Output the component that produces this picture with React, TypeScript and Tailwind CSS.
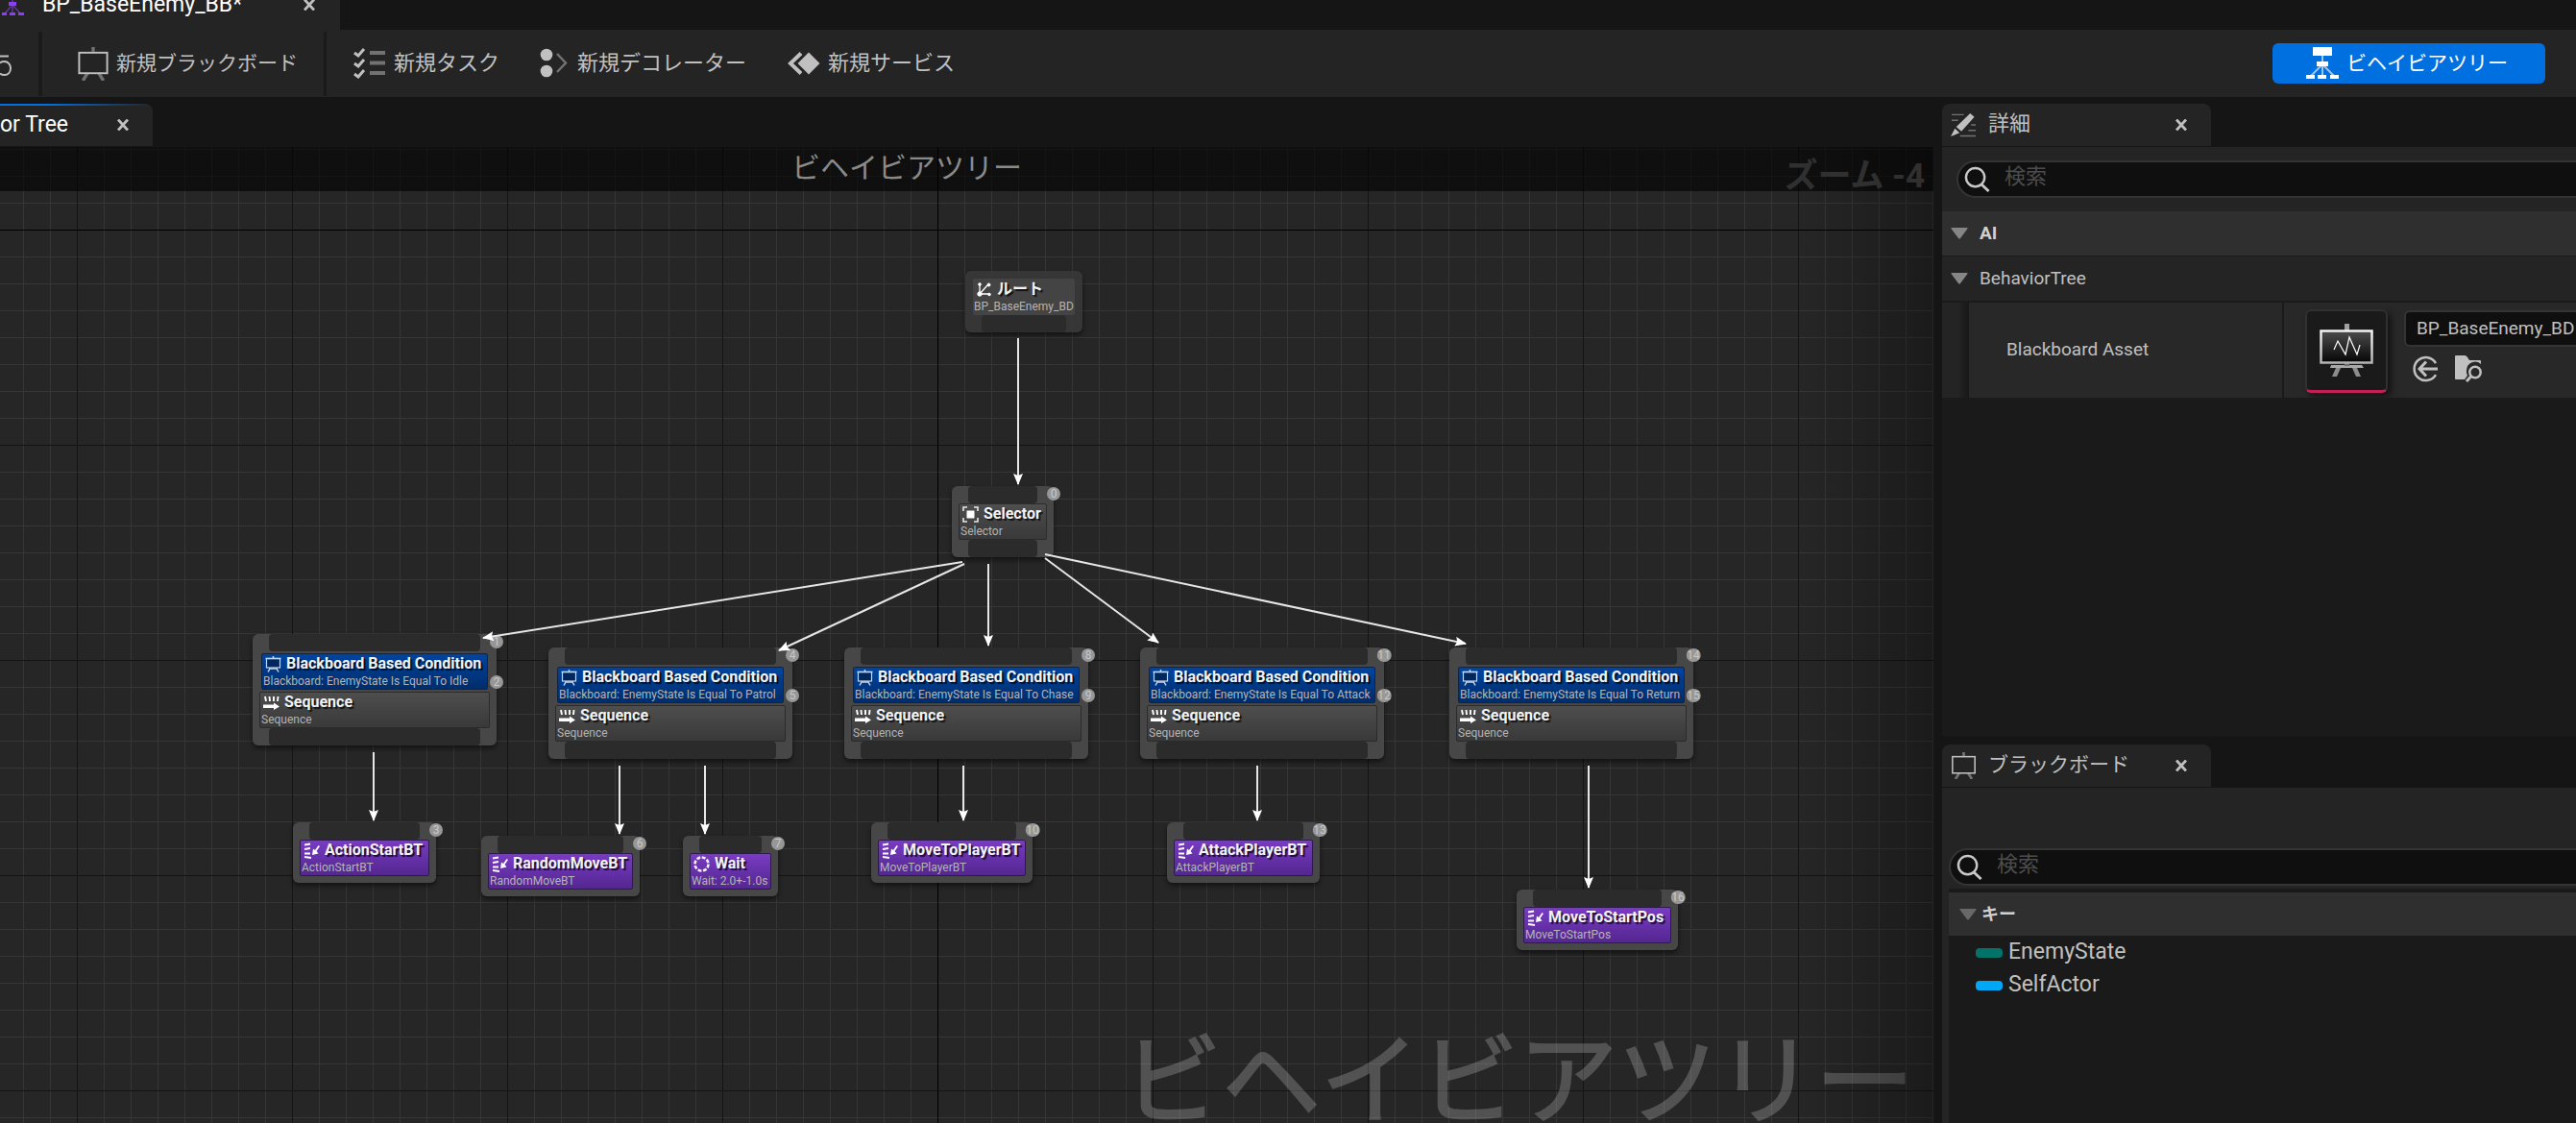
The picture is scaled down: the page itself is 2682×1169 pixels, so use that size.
import React from "react";

type IconProps = { className?: string };

/* ---------- icons ---------- */

const TreeIcon = ({ className }: IconProps) => (
  <svg viewBox="0 0 34 34" className={className} fill="currentColor" aria-hidden="true">
    <path d="M17 9v8M17 18L4 31M17 18v12M17 18l13 13" stroke="currentColor" strokeOpacity="0.6" strokeWidth="2" fill="none" />
    <rect x="7" y="0" width="20" height="9" />
    <rect x="11" y="15" width="12" height="5" />
    <rect x="0" y="29" width="9" height="4" />
    <rect x="12" y="29" width="9" height="4" />
    <rect x="25" y="29" width="9" height="4" />
  </svg>
);

const AssetTreeIcon = ({ className }: IconProps) => (
  <svg viewBox="0 0 24 24" className={className} fill="currentColor" aria-hidden="true">
    <path d="M12 2v8M12 12L3 22M12 12v9M12 12l9 10" stroke="currentColor" strokeOpacity="0.6" strokeWidth="1.5" fill="none" />
    <rect x="8" y="9" width="8" height="4" />
    <rect x="1" y="20" width="5" height="3" />
    <rect x="9" y="20" width="6" height="3" />
    <rect x="18" y="20" width="6" height="3" />
  </svg>
);

const UndoIcon = ({ className }: IconProps) => (
  <svg viewBox="0 0 14 24" className={className} fill="none" stroke="currentColor" strokeWidth="2" aria-hidden="true">
    <path d="M0 2.500H9M0 9.500c1-1 3-1.500 4.500-1.500 4 0 6.500 3.200 6.500 7 0 4-2.500 7-6.500 7-2 0-3.500-.6-4.500-1.500" />
  </svg>
);

const BoardIcon = ({ className }: IconProps) => (
  <svg viewBox="0 0 34 36" className={className} fill="none" stroke="currentColor" aria-hidden="true">
    <path d="M17 0v5M11 28l-5 8M23 28l5 8" strokeOpacity="0.5" strokeWidth="3.500" />
    <rect x="2" y="6" width="30" height="22" strokeWidth="2" />
  </svg>
);

const TaskIcon = ({ className }: IconProps) => (
  <svg viewBox="0 0 34 32" className={className} fill="none" stroke="currentColor" aria-hidden="true">
    <path d="M1 5l4 3 6-7M1 16l4 3 6-7M1 27l4 3 6-7" strokeWidth="3" />
    <path d="M17 5h16M17 15.500h16M17 26h16" strokeWidth="4" strokeOpacity="0.5" />
  </svg>
);

const DecoratorIcon = ({ className }: IconProps) => (
  <svg viewBox="0 0 30 32" className={className} aria-hidden="true">
    <circle cx="7" cy="7" r="6.300" fill="currentColor" />
    <circle cx="7" cy="24" r="6.300" fill="currentColor" />
    <path d="M18 6l9 9.500-9 9.500" fill="none" stroke="currentColor" strokeOpacity="0.5" strokeWidth="2.500" />
  </svg>
);

const ServiceIcon = ({ className }: IconProps) => (
  <svg viewBox="0 0 34 24" className={className} aria-hidden="true">
    <path d="M22 0.500L33.500 12 22 23.500 10.500 12z" fill="currentColor" />
    <path d="M14 1.500L3 12l11 10.500" fill="none" stroke="currentColor" strokeWidth="4" />
  </svg>
);

const PencilIcon = ({ className }: IconProps) => (
  <svg viewBox="0 0 28 26" className={className} aria-hidden="true">
    <path d="M1 2h13M1 8h7M22 13h5M19 19h8M10 25h17" stroke="currentColor" strokeOpacity="0.5" strokeWidth="1.500" />
    <path d="M21 0.500l4.500 4-14 15.500-5.500-5z" fill="currentColor" />
    <path d="M4.500 17l5 4.500L0 25.500z" fill="currentColor" />
  </svg>
);

const SearchIcon = ({ className }: IconProps) => (
  <svg viewBox="0 0 28 28" className={className} fill="none" stroke="currentColor" strokeWidth="2.500" aria-hidden="true">
    <circle cx="12" cy="12" r="10" />
    <path d="M18.500 19.500L26.500 27" strokeWidth="3" />
  </svg>
);

const CloseIcon = ({ className }: IconProps) => (
  <svg viewBox="0 0 12 12" className={className} fill="none" stroke="currentColor" strokeWidth="2.800" aria-hidden="true">
    <path d="M1 0.500L11 11.500M11 0.500L1 11.500" />
  </svg>
);

const Triangle = ({ className }: IconProps) => (
  <svg viewBox="0 0 18 12" className={className} fill="currentColor" aria-hidden="true">
    <path d="M1 0h16q1 0 .5 1L10 11q-1 1-2 0L.5 1Q0 0 1 0z" />
  </svg>
);

const BoardThumb = () => (
  <svg viewBox="0 0 56 56" className="h-14 w-14" aria-hidden="true">
    <defs>
      <linearGradient id="screen" x1="0" y1="0" x2="0" y2="1">
        <stop offset="0" stopColor="#4d4d4d" />
        <stop offset="1" stopColor="#050505" />
      </linearGradient>
      <linearGradient id="frame" x1="0" y1="0" x2="0" y2="1">
        <stop offset="0" stopColor="#f4f4f4" />
        <stop offset="1" stopColor="#b4b4b4" />
      </linearGradient>
    </defs>
    <rect x="26" y="0" width="5" height="8" fill="#a0a0a0" />
    <path d="M12 43h32l2 3H11z" fill="#a8a8a8" />
    <path d="M17 46h5l-4 9h-5zM34 46h5l4 9h-5z" fill="#8c8c8c" />
    <rect x="26" y="40" width="5" height="4" fill="#6e6e6e" />
    <rect x="1.500" y="7.500" width="53" height="33" fill="url(#screen)" stroke="url(#frame)" strokeWidth="2.500" />
    <path d="M15 27l4-9 8 14 4-18 8 18 3-10" fill="none" stroke="#ffffff" strokeWidth="1.200" />
  </svg>
);

const UseSelectedIcon = ({ className }: IconProps) => (
  <svg viewBox="0 0 28 28" className={className} fill="none" stroke="currentColor" strokeWidth="3" aria-hidden="true">
    <path d="M25 8A12 12 0 1 0 25 20" strokeWidth="2.500" />
    <path d="M27 14H9M15 6.500L8 14l7 7.500" />
  </svg>
);

const BrowseIcon = ({ className }: IconProps) => (
  <svg viewBox="0 0 28 28" className={className} aria-hidden="true">
    <path d="M1 0h9q2 0 3 2l2 3h11q1 0 1 1v3a9 9 0 0 0-15 6 9 9 0 0 0 1 6l-3 4H1q-1 0-1-1V1q0-1 1-1z" fill="currentColor" />
    <circle cx="21" cy="17.500" r="5.700" fill="none" stroke="currentColor" strokeWidth="2.500" />
    <path d="M16.500 22l-4.500 5" stroke="currentColor" strokeWidth="3" />
  </svg>
);

const RootGlyph = () => (
  <svg viewBox="0 0 17 17" className="size-[17px] shrink-0" stroke="#fff" fill="#fff" aria-hidden="true">
    <path d="M4 4v9h9M4 13l8-9" fill="none" strokeWidth="1.300" />
    <circle cx="4" cy="3" r="1.300" />
    <circle cx="13.500" cy="3.500" r="1.500" />
    <circle cx="4" cy="13" r="2.200" />
    <circle cx="14" cy="13.500" r="1.300" />
  </svg>
);

const SelectorGlyph = () => (
  <svg viewBox="0 0 17 17" className="size-[17px] shrink-0" aria-hidden="true">
    <rect x="4.500" y="4.500" width="8" height="8" fill="#fff" />
    <path d="M1 5V1h4M12 1h4v4M16 12v4h-4M5 16H1v-4" fill="none" stroke="#e8e8e8" strokeWidth="1.600" />
  </svg>
);

const SequenceGlyph = () => (
  <svg viewBox="0 0 17 17" className="size-[17px] shrink-0" aria-hidden="true">
    <path d="M2 2l1 5M6.500 2l.5 5M11 2v5M15.500 2l-.5 5" stroke="#fff" strokeWidth="1.900" />
    <path d="M0 10.500h11V8.500L17 12.500l-6 3.500v-2H0z" fill="#fff" />
  </svg>
);

const ConditionGlyph = () => (
  <svg viewBox="0 0 17 17" className="size-[17px] shrink-0" fill="none" stroke="#c9d6ea" aria-hidden="true">
    <rect x="1.500" y="2.500" width="14" height="9.500" fill="#00285f" strokeWidth="1.200" />
    <path d="M0.500 2.500h16M8.500 0v2M5 13l-2 3.500M12 13l2 3.500M4 13h9" strokeWidth="1.500" />
  </svg>
);

const TaskGlyph = () => (
  <svg viewBox="0 0 17 17" className="size-[17px] shrink-0" aria-hidden="true">
    <path d="M1 2.500l6-1M1 7l6-1M1 11.500h6M1 15l7 1" stroke="#fff" strokeWidth="1.900" />
    <path d="M17 4l-3.500 5 2 2.500-6.500 1.500 1-6.500 2 1.500L15.500 3z" fill="#fff" />
  </svg>
);

const WaitGlyph = () => (
  <svg viewBox="0 0 17 17" className="size-[17px] shrink-0" fill="none" stroke="#f2ecff" aria-hidden="true">
    <circle cx="8.500" cy="8.500" r="7" strokeWidth="2.600" strokeDasharray="3.900 1.600" />
  </svg>
);

/* ---------- graph ---------- */

type Kind = "root" | "composite" | "task";

type GraphNode = {
  x: number;
  y: number;
  w: number;
  kind: Kind;
  title: string;
  subtitle: string;
  glyph: React.ReactNode;
  order?: number;
  condition?: { text: string; order: number };
};

const sequence = (x: number, y: number, order: number, state: string): GraphNode => ({
  x,
  y,
  w: 254,
  kind: "composite",
  title: "Sequence",
  subtitle: "Sequence",
  glyph: <SequenceGlyph />,
  order,
  condition: { text: `Blackboard: EnemyState Is Equal To ${state}`, order: order + 1 },
});

const task = (x: number, y: number, w: number, order: number, title: string): GraphNode => ({
  x,
  y,
  w,
  kind: "task",
  title,
  subtitle: title,
  glyph: <TaskGlyph />,
  order,
});

const nodes: GraphNode[] = [
  { x: 1005, y: 129, w: 122, kind: "root", title: "ルート", subtitle: "BP_BaseEnemy_BD", glyph: <RootGlyph /> },
  { x: 991, y: 353, w: 106, kind: "composite", title: "Selector", subtitle: "Selector", glyph: <SelectorGlyph />, order: 0 },
  sequence(263, 507, 1, "Idle"),
  sequence(571, 521, 4, "Patrol"),
  sequence(879, 521, 8, "Chase"),
  sequence(1187, 521, 11, "Attack"),
  sequence(1509, 521, 14, "Return"),
  task(305, 703, 149, 3, "ActionStartBT"),
  task(501, 717, 165, 6, "RandomMoveBT"),
  {
    x: 711,
    y: 717,
    w: 99,
    kind: "task",
    title: "Wait",
    subtitle: "Wait: 2.0+-1.0s",
    glyph: <WaitGlyph />,
    order: 7,
  },
  task(907, 703, 168, 10, "MoveToPlayerBT"),
  task(1215, 703, 159, 13, "AttackPlayerBT"),
  task(1579, 773, 168, 16, "MoveToStartPos"),
];

const links: [number, number, number, number][] = [
  [1060, 199, 1060, 351],
  [1002, 432, 503, 511],
  [1004, 434, 811, 524],
  [1029, 434, 1029, 519],
  [1088, 428, 1206, 516],
  [1088, 424, 1526, 517],
  [389, 630, 389, 701],
  [645, 644, 645, 715],
  [734, 644, 734, 715],
  [1003, 644, 1003, 701],
  [1309, 644, 1309, 701],
  [1654, 644, 1654, 771],
];

function GraphBackdrop() {
  return (
    <svg className="absolute inset-0 h-full w-full" aria-hidden="true">
      <defs>
        <pattern id="minor" width="28" height="28" patternUnits="userSpaceOnUse" x="24" y="2">
          <path d="M0 0h28v1H1v27H0z" fill="#363636" />
        </pattern>
        <pattern id="major" width="224" height="224" patternUnits="userSpaceOnUse" x="80" y="86">
          <path d="M0 0h224v1H1v223H0z" fill="#141414" />
        </pattern>
      </defs>
      <rect width="100%" height="100%" fill="#262626" />
      <rect width="100%" height="100%" fill="url(#minor)" />
      <rect width="100%" height="100%" fill="url(#major)" />
      <rect x="976" y="0" width="1" height="100%" fill="#000" />
      <rect x="0" y="86" width="100%" height="1" fill="#000" />
    </svg>
  );
}

function GraphLinks() {
  return (
    <svg className="pointer-events-none absolute inset-0 h-full w-full" aria-hidden="true">
      <defs>
        <marker id="arrow" viewBox="0 0 12 10" refX="11" refY="5" markerWidth="12" markerHeight="10" markerUnits="userSpaceOnUse" orient="auto">
          <path d="M0 0L12 5 0 10 2 5z" fill="#fff" />
        </marker>
      </defs>
      {links.map(([x1, y1, x2, y2], i) => (
        <line key={i} x1={x1} y1={y1} x2={x2} y2={y2} stroke="#e6e6e6" strokeWidth="2" markerEnd="url(#arrow)" />
      ))}
    </svg>
  );
}

function Badge({ value, place }: { value: number; place: string }) {
  return (
    <span
      className={`absolute flex h-[14px] min-w-[14px] translate-x-1/2 items-center justify-center rounded-full bg-[#979797] px-px text-[12px] leading-[14px] text-[#c8c8c8] ${place}`}
    >
      {value}
    </span>
  );
}

function Block({ glyph, title, subtitle, tone }: { glyph: React.ReactNode; title: string; subtitle: string; tone: string }) {
  return (
    <div className={`h-[38px] overflow-hidden rounded-[2px] ${tone}`}>
      <div className="flex h-[20px] items-center gap-[5px] pl-[3px]">
        {glyph}
        <h3 className="whitespace-nowrap text-[16px] leading-[20px] font-bold text-[#f2f2f2] [text-shadow:2px_2px_1px_rgba(0,0,0,0.75)]">
          {title}
        </h3>
      </div>
      <p className="pl-px text-[12px] leading-[16px] whitespace-nowrap text-[#b4b4b4]">{subtitle}</p>
    </div>
  );
}

const Pin = () => <div className="mx-[17px] h-[18px] rounded-[4px] bg-[#2b2b2b]" />;

function NodeCard({ node }: { node: GraphNode }) {
  const shell = node.kind === "root" ? "bg-[#383838]/90 pt-2" : "bg-[#494949]/95";
  const tone =
    node.kind === "root"
      ? "bg-[#444444] mx-2 pt-px"
      : node.kind === "task"
        ? "mx-[7px] border border-[#2d1a4d] bg-linear-to-b from-[#793bc4] to-[#54278f]"
        : "mx-[7px] border border-[#2b2b2b] bg-linear-to-b from-[#4e4e4e] to-[#393939]";
  return (
    <article
      className={`absolute flex flex-col rounded-[6px] shadow-[0_3px_5px_rgba(0,0,0,0.5)] ${shell}`}
      style={{ left: node.x, top: node.y, width: node.w }}
    >
      {node.kind !== "root" && <Pin />}
      {node.condition && (
        <div className="mx-[9px] my-[2px]">
          <Block
            glyph={<ConditionGlyph />}
            title="Blackboard Based Condition"
            subtitle={node.condition.text}
            tone="border border-[#12233f] bg-linear-to-b from-[#01449f] to-[#002d6b]"
          />
        </div>
      )}
      <div className={node.kind === "task" ? "pb-[7px]" : ""}>
        <Block glyph={node.glyph} title={node.title} subtitle={node.subtitle} tone={tone} />
      </div>
      {node.kind !== "task" && <Pin />}
      {node.order !== undefined && <Badge value={node.order} place="right-0 top-[1px]" />}
      {node.condition && <Badge value={node.condition.order} place="right-0 top-[43px]" />}
    </article>
  );
}

function GraphPane() {
  return (
    <section className="flex min-w-0 flex-1 flex-col">
      <div className="flex h-[52px] items-end pb-px">
        <div className="relative flex h-[44px] w-[159px] items-center overflow-hidden rounded-tr-lg bg-[#242424]">
          <span className="absolute inset-x-0 top-0 h-[2px] bg-linear-to-r from-[#0070e0] from-30% to-[#0070e0]/0" />
          <h2 className="flex-1 text-[23px] leading-7 text-white">or Tree</h2>
          <button type="button" aria-label="Close tab" className="mr-[25px] text-[#c0c0c0]">
            <CloseIcon className="size-3" />
          </button>
        </div>
      </div>
      <div className="relative flex-1 overflow-hidden">
        <GraphBackdrop />
        <p className="absolute right-[20px] bottom-[-34px] text-[103px] leading-[152px] whitespace-nowrap text-white opacity-20 [-webkit-text-stroke:2px_white]">
          ビヘイビアツリー
        </p>
        {nodes.map((node) => (
          <NodeCard key={`${node.title}-${node.x}`} node={node} />
        ))}
        <GraphLinks />
        <div className="pointer-events-none absolute inset-y-0 right-0 w-[140px] bg-linear-to-r from-black/0 to-black/30" />
        <div className="absolute inset-x-0 top-0 h-[46px] bg-black/60">
          <h1 className="pl-[824px] text-[30px] leading-[44px] text-[#8a8a8a]">ビヘイビアツリー</h1>
          <p className="absolute top-[9px] right-[9px] text-[35px] leading-[44px] font-bold text-[#303030]">ズーム -4</p>
        </div>
      </div>
    </section>
  );
}

/* ---------- side panels ---------- */

function PanelTab({ icon, label, size }: { icon: React.ReactNode; label: string; size: string }) {
  return (
    <div className="flex h-[44px] w-[280px] items-center rounded-t-lg bg-[#242424] pr-[25px] pl-[9px] text-[#c0c0c0]">
      {icon}
      <h2 className={`ml-[12px] flex-1 pb-[2px] leading-8 whitespace-nowrap ${size}`}>{label}</h2>
      <button type="button" aria-label={`${label} を閉じる`}>
        <CloseIcon className="size-3" />
      </button>
    </div>
  );
}

function SearchBox({ id }: { id: string }) {
  return (
    <label
      htmlFor={id}
      className="flex h-[39px] items-center rounded-l-[20px] border-2 border-r-0 border-[#343434] bg-[#0f0f0f] pl-[6px] text-[#c8c8c8]"
    >
      <SearchIcon className="size-[27px]" />
      <input
        id={id}
        type="text"
        aria-label="検索"
        placeholder="検索"
        className="ml-[15px] h-[32px] min-w-0 flex-1 bg-transparent pb-[6px] text-[22px] leading-7 outline-none placeholder:text-[#4c4c4c]"
      />
    </label>
  );
}

function DetailsPanel() {
  return (
    <section className="flex h-[665px] flex-col bg-[#151515]">
      <div className="flex h-[52px] items-end pb-px">
        <PanelTab icon={<PencilIcon className="h-[26px] w-[27px]" />} label="詳細" size="text-[22px]" />
      </div>
      <div className="bg-[#242424] pt-[14px] pb-[14px] pl-[15px]">
        <SearchBox id="details-search" />
      </div>
      <button type="button" className="flex h-[47px] items-center border-b border-[#1a1a1a] bg-[#2f2f2f] pl-[9px] text-[#d0d0d0]">
        <Triangle className="h-3 w-[18px] text-[#868686]" />
        <span className="ml-[12px] text-[19px] leading-6 font-bold">AI</span>
      </button>
      <button type="button" className="flex h-[48px] items-center border-b-2 border-[#1a1a1a] bg-[#242424] pl-[9px] text-[#c0c0c0]">
        <Triangle className="h-3 w-[18px] text-[#868686]" />
        <span className="ml-[12px] text-[19px] leading-6">BehaviorTree</span>
      </button>
      <div className="flex h-[99px] bg-[#1a1a1a]">
        <div className="w-[18px] bg-[#242424]" />
        <div className="w-[10px] bg-linear-to-r from-[#222222] to-[#181818]" />
        <div className="flex w-[326px] items-center bg-[#282828] pl-[39px] text-[19px] text-[#c0c0c0]">Blackboard Asset</div>
        <div className="ml-[2px] flex min-w-0 flex-1 overflow-hidden bg-[#282828] pt-[7px] pl-[22px]">
          <button
            type="button"
            aria-label="BP_BaseEnemy_BD thumbnail"
            className="flex h-[87px] w-[86px] shrink-0 items-center justify-center overflow-hidden rounded-[6px] border-2 border-b-[3px] border-[#303030] border-b-[#c41e56] bg-[#1a1a1a] shadow-[4px_4px_6px_rgba(0,0,0,0.5)]"
          >
            <BoardThumb />
          </button>
          <div className="ml-[17px] min-w-0 flex-1 pt-px">
            <button
              type="button"
              className="flex h-[38px] w-full items-center overflow-hidden rounded-l-[6px] border-2 border-r-0 border-[#343434] bg-[#0f0f0f] pl-[11px] text-[19px] whitespace-nowrap text-[#c0c0c0]"
            >
              BP_BaseEnemy_BD
            </button>
            <div className="mt-[9px] flex gap-[17px] pl-[8px] text-[#c0c0c0]">
              <button type="button" aria-label="Use selected asset">
                <UseSelectedIcon className="size-7" />
              </button>
              <button type="button" aria-label="Browse to asset">
                <BrowseIcon className="size-7" />
              </button>
            </div>
          </div>
        </div>
      </div>
      <div className="flex-1 bg-[#1a1a1a]" />
    </section>
  );
}

const keys = [
  { name: "EnemyState", tone: "bg-[#03736a]" },
  { name: "SelfActor", tone: "bg-[#00a8f5]" },
];

function BlackboardPanel() {
  return (
    <section className="flex flex-1 flex-col pt-[9px]">
      <PanelTab icon={<BoardIcon className="h-[28px] w-[27px]" />} label="ブラックボード" size="text-[21px]" />
      <div className="mt-px flex flex-1 flex-col bg-[#242424] pt-[63px] pl-[7px]">
        <SearchBox id="blackboard-search" />
        <div className="mt-[3px] flex-1 bg-[#1a1a1a] pt-[4px]">
          <button type="button" className="flex h-[45px] w-full items-center bg-[#2f2f2f] pl-[11px] text-[#d0d0d0]">
            <Triangle className="h-3 w-[18px] text-[#686868]" />
            <span className="ml-[5px] text-[18px] leading-6 font-bold">キー</span>
          </button>
          <ul>
            {keys.map((key) => (
              <li key={key.name} className="flex h-[34px] items-center pt-px pl-[28px] text-[23px] text-[#c0c0c0]">
                <span className={`h-[10px] w-[28px] rounded-[4px] ${key.tone}`} />
                <span className="ml-[6px]">{key.name}</span>
              </li>
            ))}
          </ul>
        </div>
      </div>
    </section>
  );
}

/* ---------- toolbar ---------- */

function ToolButton({ icon, label, className }: { icon: React.ReactNode; label: string; className: string }) {
  return (
    <button type="button" className={`flex shrink-0 items-center leading-8 whitespace-nowrap ${className}`}>
      {icon}
      {label}
    </button>
  );
}

export default function App() {
  return (
    <div className="flex min-h-screen flex-col overflow-hidden bg-[#151515] font-['Roboto','Noto_Sans_CJK_JP',sans-serif] text-[#c0c0c0]">
      <header>
        <div className="flex h-[31px] overflow-hidden">
          <div className="flex h-[31px] w-[354px] items-end bg-[#242424]">
            <AssetTreeIcon className="mb-[14px] ml-px size-6 text-[#8b3ff5]" />
            <span className="mb-[12px] ml-[19px] flex-1 text-[23px] leading-7 text-white">BP_BaseEnemy_BB*</span>
            <button type="button" aria-label="Close asset" className="mr-[26px] mb-[20px]">
              <CloseIcon className="size-3" />
            </button>
          </div>
        </div>
        <nav className="flex h-[70px] items-center bg-[#242424]">
          <button type="button" aria-label="Undo" className="w-10">
            <UndoIcon className="mt-1 h-6 w-[14px]" />
          </button>
          <span className="h-[67px] w-1 bg-[#1a1a1a]" />
          <ToolButton className="w-[293px] gap-[7px] pl-[36px] text-[21px]" icon={<BoardIcon className="h-[35px] w-[34px]" />} label="新規ブラックボード" />
          <span className="h-[67px] w-[3px] bg-[#1a1a1a]" />
          <ToolButton className="w-[194px] gap-[8px] pl-[28px] text-[22px]" icon={<TaskIcon className="h-8 w-[34px]" />} label="新規タスク" />
          <ToolButton className="w-[260px] gap-[9px] pl-[28px] text-[22px]" icon={<DecoratorIcon className="h-8 w-[30px]" />} label="新規デコレーター" />
          <ToolButton className="gap-[8px] pl-[26px] text-[22px]" icon={<ServiceIcon className="h-6 w-[34px]" />} label="新規サービス" />
          <button
            type="button"
            className="mr-8 ml-auto flex h-[42px] w-[284px] items-center gap-[8px] rounded-[6px] bg-[#0070e0] pl-[35px] text-[21px] leading-8 text-white"
          >
            <TreeIcon className="h-[34px] w-[34px]" />
            ビヘイビアツリー
          </button>
        </nav>
      </header>
      <main className="flex flex-1 gap-[9px]">
        <GraphPane />
        <aside className="flex w-[660px] shrink-0 flex-col">
          <DetailsPanel />
          <BlackboardPanel />
        </aside>
      </main>
    </div>
  );
}
